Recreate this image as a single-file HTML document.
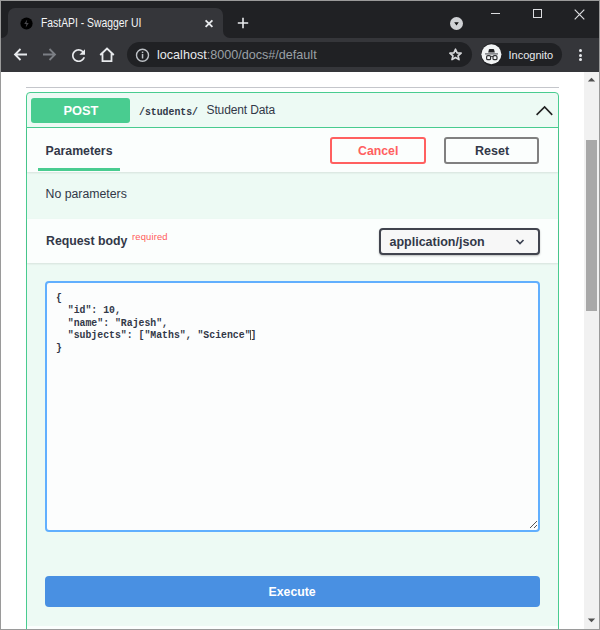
<!DOCTYPE html>
<html><head><meta charset="utf-8">
<style>
*{margin:0;padding:0;box-sizing:border-box}
html,body{width:600px;height:630px;overflow:hidden;background:#fff;font-family:"Liberation Sans",sans-serif}
.a{position:absolute}
.t{position:absolute;line-height:1;white-space:pre}
#frame{position:absolute;left:0;top:0;width:600px;height:630px;border:1px solid #9a9a9a;border-right-width:1px;pointer-events:none;z-index:50}
</style></head><body>
<!-- tab strip -->
<div class="a" style="left:0;top:0;width:600px;height:38px;background:#202124"></div>
<!-- active tab -->
<div class="a" style="left:8px;top:8px;width:215px;height:31px;background:#35363a;border-radius:7px 7px 0 0"></div>
<!-- tab foot curves -->
<div class="a" style="left:1px;top:31px;width:7px;height:7px;background:#35363a"></div>
<div class="a" style="left:1px;top:24px;width:7px;height:14px;background:#202124;border-radius:0 0 7px 0"></div>
<div class="a" style="left:223px;top:31px;width:7px;height:7px;background:#35363a"></div>
<div class="a" style="left:223px;top:24px;width:7px;height:14px;background:#202124;border-radius:0 0 0 7px"></div>
<!-- toolbar -->
<div class="a" style="left:0;top:38px;width:600px;height:34px;background:#35363a"></div>

<!-- favicon -->
<svg class="a" style="left:20px;top:16.5px" width="13" height="13" viewBox="0 0 13 13"><circle cx="6.5" cy="6.5" r="6.1" fill="#000"/><path d="M7.2 2.4 L4.2 7 H6.4 L5.7 10.6 L8.7 6 H6.5 Z" fill="#48484c"/></svg>
<div class="t" style="left:40.6px;top:17.8px;font-size:11.9px;transform:scaleX(0.872);transform-origin:0 0;color:#f4f5f6">FastAPI - Swagger UI</div>
<!-- tab close -->
<svg class="a" style="left:203px;top:18px" width="12" height="12" viewBox="0 0 12 12"><path d="M2.6 2.4 L9.4 8.9 M9.4 2.4 L2.6 8.9" stroke="#e8eaed" stroke-width="1.9"/></svg>
<!-- new tab plus -->
<svg class="a" style="left:237px;top:17px" width="12" height="12" viewBox="0 0 12 12"><path d="M6 0.8 V11.2 M0.8 6 H11.2" stroke="#e8eaed" stroke-width="1.6"/></svg>
<!-- tab search -->
<svg class="a" style="left:450px;top:16.6px" width="13" height="13" viewBox="0 0 13 13"><circle cx="6.5" cy="6.5" r="6.5" fill="#d0d2d5"/><path d="M4.2 5.2 H8.8 L6.5 8.4 Z" fill="#111"/></svg>
<!-- window controls -->
<div class="a" style="left:491.3px;top:13px;width:9.2px;height:1.1px;background:#dcdde0"></div>
<div class="a" style="left:533.2px;top:9.1px;width:9px;height:9px;border:1.1px solid #dcdde0"></div>
<svg class="a" style="left:573.5px;top:8.5px" width="11" height="11" viewBox="0 0 11 11"><path d="M0.7 0.7 L10.3 10.3 M10.3 0.7 L0.7 10.3" stroke="#dcdde0" stroke-width="1.2"/></svg>

<!-- toolbar icons -->
<svg class="a" style="left:13px;top:47px" width="15" height="15" viewBox="0 0 15 15"><path d="M14 7.5 H2.5 M7.5 2 L2 7.5 L7.5 13" stroke="#e8eaed" stroke-width="1.8" fill="none"/></svg>
<svg class="a" style="left:42px;top:47px" width="15" height="15" viewBox="0 0 15 15"><path d="M1 7.5 H12.5 M7.5 2 L13 7.5 L7.5 13" stroke="#7c7f85" stroke-width="1.8" fill="none"/></svg>
<svg class="a" style="left:71.8px;top:48.5px" width="13.2" height="13.2" viewBox="4 4 16 16"><path d="M17.65 6.35C16.2 4.9 14.21 4 12 4c-4.42 0-7.99 3.580-7.99 8s3.57 8 7.99 8c3.73 0 6.84-2.55 7.730-6h-2.08c-.82 2.33-3.04 4-5.65 4-3.31 0-6-2.69-6-6s2.69-6 6-6c1.66 0 3.14.69 4.22 1.78L13 11h7V4l-2.35 2.35z" fill="#e8eaed"/></svg>
<svg class="a" style="left:98.6px;top:47px" width="16" height="16" viewBox="0 0 16 16"><path d="M1.2 8 L8 1.5 L14.8 8 M3.5 6.5 V14.2 H12.5 V6.5" stroke="#e8eaed" stroke-width="1.8" fill="none" stroke-linejoin="miter"/></svg>

<!-- omnibox -->
<div class="a" style="left:127px;top:42px;width:345px;height:25px;background:#202124;border-radius:12.5px"></div>
<svg class="a" style="left:135px;top:47.5px" width="15" height="15" viewBox="0 0 15 15"><circle cx="7.5" cy="7.2" r="6" stroke="#bdc1c6" stroke-width="1.4" fill="none"/><rect x="6.8" y="6" width="1.5" height="4.5" fill="#bdc1c6"/><rect x="6.8" y="3.6" width="1.5" height="1.5" fill="#bdc1c6"/></svg>
<div class="t" style="left:157px;top:49px;font-size:12.6px;color:#9aa0a6"><span style="color:#e8eaed">localhost</span>:8000/docs#/default</div>
<svg class="a" style="left:448px;top:47px" width="15" height="15" viewBox="0 0 24 24"><path d="M12 3.6 L14.6 9.4 L21 9.9 L16.1 14 L17.6 20.2 L12 16.9 L6.4 20.2 L7.9 14 L3 9.9 L9.4 9.4 Z" stroke="#d6d8db" stroke-width="2.7" fill="none" stroke-linejoin="round"/></svg>

<!-- incognito pill -->
<div class="a" style="left:481px;top:43px;width:81px;height:23px;background:#202124;border-radius:11.5px"></div>
<svg class="a" style="left:481px;top:44px" width="21" height="21" viewBox="0 0 21 21"><circle cx="10.4" cy="10.2" r="10" fill="#f1f3f4"/><path d="M7.2 8.5 L7.9 5.6 Q8.1 4.9 8.7 4.9 L12.3 4.9 Q12.9 4.9 13.1 5.6 L13.8 8.5 Z" fill="#202124"/><rect x="4" y="9" width="13" height="1.7" fill="#8a8c90"/><rect x="5.6" y="11.7" width="4" height="4" rx="1.3" stroke="#303134" stroke-width="1.2" fill="none"/><rect x="12" y="11.7" width="4" height="4" rx="1.3" stroke="#303134" stroke-width="1.2" fill="none"/><path d="M9.5 12.6 Q10.8 11.8 12.1 12.6" stroke="#303134" stroke-width="1.1" fill="none"/></svg>
<div class="t" style="left:508.5px;top:49.5px;font-size:11px;color:#e8eaed">Incognito</div>
<!-- menu dots -->
<div class="a" style="left:578.5px;top:49.3px;width:3px;height:3px;background:#e8eaed;border-radius:50%"></div>
<div class="a" style="left:578.5px;top:53.6px;width:3px;height:3px;background:#e8eaed;border-radius:50%"></div>
<div class="a" style="left:578.5px;top:57.9px;width:3px;height:3px;background:#e8eaed;border-radius:50%"></div>

<!-- scrollbar -->
<div class="a" style="left:584px;top:72px;width:15px;height:557px;background:#f1f1f1"></div>
<div class="a" style="left:586px;top:140px;width:11px;height:171px;background:#a8a8a8"></div>
<svg class="a" style="left:587px;top:76px" width="9" height="7" viewBox="0 0 9 7"><path d="M0.8 5.5 L4.5 1.8 L8.2 5.5 Z" fill="#505050"/></svg>
<svg class="a" style="left:587px;top:617px" width="9" height="7" viewBox="0 0 9 7"><path d="M0.8 1.5 L4.5 5.2 L8.2 1.5 Z" fill="#505050"/></svg>

<!-- tag bottom line -->
<div class="a" style="left:26px;top:87px;width:533px;height:1px;background:#c4c6cb"></div>

<!-- opblock -->
<div class="a" style="left:26px;top:92px;width:533px;height:560px;border:1px solid #49cc90;border-radius:4px;background:#edfaf4"></div>
<div class="a" style="left:27px;top:127px;width:531px;height:1px;background:#49cc90"></div>
<!-- POST -->
<div class="a" style="left:31px;top:98px;width:99px;height:25px;background:#49cc90;border-radius:3px"></div>
<div class="t" style="left:63.5px;top:104.5px;font-size:12.85px;font-weight:bold;color:#fff">POST</div>
<div class="t" style="left:139px;top:105.6px;font-family:'Liberation Mono',monospace;font-size:11.5px;transform:scaleX(0.855);transform-origin:0 0;font-weight:bold;color:#323848">/students/</div>
<div class="t" style="left:206.5px;top:103.84px;font-size:12px;letter-spacing:-0.12px;color:#323848">Student Data</div>
<svg class="a" style="left:535px;top:104px" width="19" height="12" viewBox="0 0 19 12"><path d="M1.6 10.9 L9.6 2.9 L17.2 10.9" stroke="#222" stroke-width="1.6" fill="none"/></svg>

<!-- parameters header -->
<div class="a" style="left:27px;top:128px;width:531px;height:44px;background:#fbfefd;box-shadow:0 1px 2px rgba(0,0,0,.1)"></div>
<div class="t" style="left:45.5px;top:145.2px;font-size:12.3px;font-weight:bold;color:#323848">Parameters</div>
<div class="a" style="left:38px;top:168px;width:82px;height:3px;background:#49cc90"></div>
<div class="a" style="left:330px;top:137px;width:96px;height:27px;border:2px solid #ff6060;border-radius:3px;background:transparent"></div>
<div class="t" style="left:358px;top:145px;font-size:12.3px;font-weight:bold;color:#ff6060">Cancel</div>
<div class="a" style="left:444px;top:137px;width:95px;height:27px;border:2px solid #808080;border-radius:3px;background:transparent"></div>
<div class="t" style="left:475px;top:144.5px;font-size:12.5px;font-weight:bold;color:#323848">Reset</div>

<div class="t" style="left:45.5px;top:188.1px;font-size:12.3px;color:#323848">No parameters</div>

<!-- request body header -->
<div class="a" style="left:27px;top:219px;width:531px;height:44px;background:#fbfefd;box-shadow:0 1px 2px rgba(0,0,0,.1)"></div>
<div class="t" style="left:46px;top:234.9px;font-size:12.3px;font-weight:bold;color:#323848">Request body</div>
<div class="t" style="left:132px;top:231.8px;font-size:9.4px;letter-spacing:0.17px;color:#ff5a5a">required</div>
<div class="a" style="left:379px;top:228px;width:161px;height:27px;border:2px solid #41444e;border-radius:4px;background:#f7f7f7;box-shadow:0 1px 2px rgba(0,0,0,.25)"></div>
<div class="t" style="left:389.5px;top:235.7px;font-size:12.5px;font-weight:bold;color:#323848">application/json</div>
<svg class="a" style="left:515px;top:237.7px" width="10" height="8" viewBox="0 0 10 8"><path d="M1.5 2 L5 5.5 L8.5 2" stroke="#3b4151" stroke-width="1.7" fill="none"/></svg>

<!-- textarea -->
<div class="a" style="left:45px;top:281px;width:495px;height:251px;border:2px solid #61affe;border-radius:4px;background:#fcfdfd"></div>
<div class="t" style="left:55.5px;top:293.00px;font-family:'Liberation Mono',monospace;font-size:11px;transform:scaleX(0.893);transform-origin:0 0;font-weight:bold;color:#323848">{</div>
<div class="t" style="left:55.5px;top:305.38px;font-family:'Liberation Mono',monospace;font-size:11px;transform:scaleX(0.893);transform-origin:0 0;font-weight:bold;color:#323848">  &quot;id&quot;: 10,</div>
<div class="t" style="left:55.5px;top:317.76px;font-family:'Liberation Mono',monospace;font-size:11px;transform:scaleX(0.893);transform-origin:0 0;font-weight:bold;color:#323848">  &quot;name&quot;: &quot;Rajesh&quot;,</div>
<div class="t" style="left:55.5px;top:330.14px;font-family:'Liberation Mono',monospace;font-size:11px;transform:scaleX(0.893);transform-origin:0 0;font-weight:bold;color:#323848">  &quot;subjects&quot;: [&quot;Maths&quot;, &quot;Science&quot;]</div>
<div class="t" style="left:55.5px;top:342.52px;font-family:'Liberation Mono',monospace;font-size:11px;transform:scaleX(0.893);transform-origin:0 0;font-weight:bold;color:#323848">}</div>

<div class="a" style="left:250px;top:330px;width:1px;height:10px;background:#555"></div>
<svg class="a" style="left:529px;top:520px" width="9" height="9" viewBox="0 0 9 9"><path d="M1 8 L8 1 M5 8 L8 5" stroke="#555" stroke-width="1"/></svg>

<!-- execute -->
<div class="a" style="left:45px;top:576px;width:495px;height:31px;background:#4990e2;border-radius:4px"></div>
<div class="t" style="left:268.5px;top:585.8px;font-size:12.3px;font-weight:bold;color:#fff">Execute</div>

<!-- responses header -->
<div class="a" style="left:27px;top:626px;width:531px;height:44px;background:#fbfefd"></div>

<div id="frame"></div>
</body></html>
